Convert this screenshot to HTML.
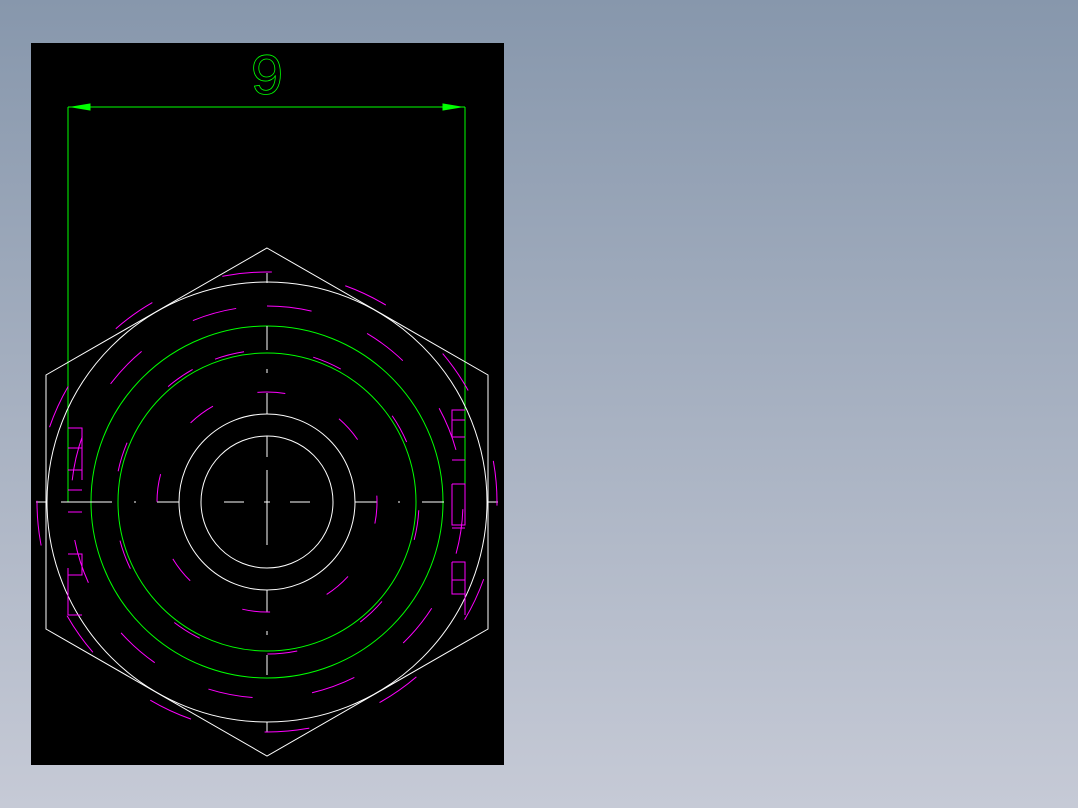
<!DOCTYPE html>
<html><head><style>
html,body{margin:0;padding:0;}
body{width:1078px;height:808px;background:linear-gradient(#8797ac,#c6cad6);overflow:hidden;position:relative;}
svg{position:absolute;left:0;top:0;}
</style></head><body>
<svg width="1078" height="808" viewBox="0 0 1078 808">
<rect x="31" y="43" width="473" height="722" fill="#000"/>
<g fill="none" stroke-width="1">
<g stroke="#00ff00">
<line x1="68" y1="107" x2="465" y2="107"/>
<line x1="68" y1="107" x2="68" y2="502"/>
<line x1="465" y1="107" x2="465" y2="487"/>
<polygon points="72,107 90,104 90,110" fill="#00ff00"/>
<polygon points="461,107 443,104 443,110" fill="#00ff00"/>
<circle cx="267" cy="502" r="176"/>
<circle cx="267" cy="502" r="149"/>
</g>
<text x="267" y="94" fill="none" stroke="#00ff00" stroke-width="0.8" font-family="Liberation Mono, monospace" font-size="58" text-anchor="middle">9</text>
<g stroke="#fff">
<polygon points="267,248 488,375 488,629 267,756 46,629 46,375"/>
<circle cx="267" cy="502" r="220"/>
<circle cx="267" cy="502" r="88"/>
<circle cx="267" cy="502" r="66"/>
<path d="M36,502H47 M61,502H112 M134,502H136 M157,502H179 M355,502H377 M398,502H400 M422,502H444 M488,502H498 M224,502H244 M264,502H270 M290,502H310"/>
<path d="M267,273V283 M267,326V350 M267,369V373 M267,393V414 M267,436V457 M267,470V545 M267,590V612 M267,631V635 M267,655V675 M267,722V732"/>
</g>
<g stroke="#ff00ff">
<circle cx="267" cy="502" r="230" stroke-dasharray="45 75" transform="rotate(-100 267 502)"/>
<circle cx="267" cy="502" r="196" stroke-dasharray="45 60" transform="rotate(-90 267 502)"/>
<circle cx="267" cy="502" r="152" stroke-dasharray="30 70" transform="rotate(-110 267 502)"/>
<circle cx="267" cy="502" r="110" stroke-dasharray="28 60" transform="rotate(-95 267 502)"/>
<path d="M68,428H82V480 M68,448H82 M68,470H82 M68,490H82 M68,512H82 M68,554H82V575H68 M68,568V615 M68,615H82"/>
<path d="M465,410H452V437H465 M452,420H465 M452,460H465 M452,484H465V525H452V484 M452,528H465 M452,562H465V594H452V562 M452,580H465 M465,590V615"/>
</g>
</g>
</svg>
</body></html>
